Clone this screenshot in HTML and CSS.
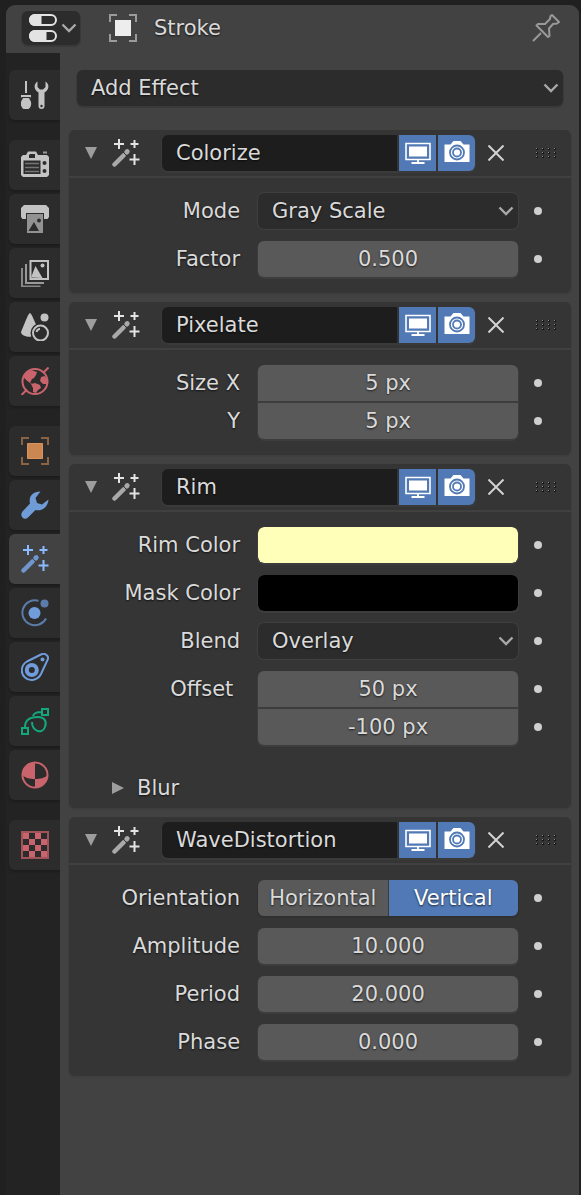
FILE: index.html
```html
<!DOCTYPE html>
<html lang="en">
<head>
<meta charset="utf-8">
<meta name="viewport" content="width=device-width, initial-scale=1">
<title>Stroke - Effects</title>
<link rel="stylesheet" href="styles.css">
</head>
<body>
<svg class="sprite" aria-hidden="true">
  <symbol id="chevron" viewBox="0 0 16 10"><path d="M1.500 1.500L8 8l6.500-6.500" fill="none" stroke="#a8a8a8" stroke-width="2.400"/></symbol>
  <symbol id="down" viewBox="0 0 12 12"><path d="M0 0h12L6 12z" fill="#9d9d9d"/></symbol>
  <symbol id="wand" viewBox="0 0 28 28">
    <path class="wand-plus" d="M7 0v10M2 5h10M22.500 1v8M18.500 5h8M22.500 15v11M17.500 20.500h10" fill="none" stroke-width="2"/>
    <path class="wand-stick" d="M2.500 25.500l9-9" fill="none" stroke-width="4.500" stroke-linecap="round"/>
    <path class="wand-stick" d="M14.800 13l.4-.4" fill="none" stroke-width="5" stroke-linecap="round"/>
    <path class="wand-band" d="M11 13l4 4" fill="none" stroke-width="1"/>
  </symbol>
  <symbol id="monitor" viewBox="0 0 28 28">
    <path d="M2 4.500h24v16H2z" fill="none" stroke="#fff" stroke-width="1.600"/>
    <path d="M5 7.500h18v10H5z" fill="#fff"/>
    <path d="M14 21v3M7.500 24h13" stroke="#fff" stroke-width="1.800"/>
  </symbol>
  <symbol id="camera" viewBox="0 0 28 28">
    <path d="M1.500 5.500h6l3-3.500h7l3 3.500h6V23h-25z" fill="#fff"/>
    <circle cx="14" cy="13.500" r="7" fill="none" stroke="#5179b5" stroke-width="1.800"/>
    <circle cx="14" cy="13.500" r="4" fill="none" stroke="#5179b5" stroke-width="1.800"/>
  </symbol>
  <symbol id="cross" viewBox="0 0 16 16"><path d="M.5.5l15 15M15.500.5l-15 15" stroke="#d2d2d2" stroke-width="2"/></symbol>
  <symbol id="grip" viewBox="0 0 22 12">
    <path d="M1 2h2m4 0h2m4 0h2m4 0h2M1 6h2m4 0h2m4 0h2m4 0h2M1 10h2m4 0h2m4 0h2m4 0h2" stroke="#151515" stroke-width="2"/>
    <path d="M1 1.500h1m5 0h1m5 0h1m5 0h1M1 5.500h1m5 0h1m5 0h1m5 0h1M1 9.500h1m5 0h1m5 0h1m5 0h1" stroke="#8c8c8c" stroke-width="1"/>
  </symbol>
</svg>

<div class="editor">
  <header class="topbar">
    <button class="editor-type" aria-label="Editor type">
      <svg class="icon" viewBox="0 0 28 28"><rect x="1" y="1" width="26" height="10" rx="5" fill="#2c2c2c" stroke="#e3e3e3" stroke-width="2"/><path d="M12.500 0H6a6 6 0 0 0 0 12h6.500z" fill="#e3e3e3"/><rect x="1" y="17" width="26" height="10" rx="5" fill="#2c2c2c" stroke="#e3e3e3" stroke-width="2"/><path d="M17.500 16H6a6 6 0 0 0 0 12h11.500z" fill="#e3e3e3"/></svg>
      <svg class="chevron"><use href="#chevron"/></svg>
    </button>
    <svg class="icon object" viewBox="0 0 28 28"><path d="M1 8V1h7M20 1h7v7M27 20v7h-7M8 27H1v-7" fill="none" stroke="#9b9b9b" stroke-width="2"/><path d="M6 6h16v16H6z" fill="#ededed"/></svg>
    <h1 class="title">Stroke</h1>
    <button class="plain pin" aria-label="Pin"><svg class="icon" viewBox="0 0 28 28"><path d="M1 27l8-8M20 1l7 7-2 1.500-4 .5-4 4.500.500 7.500-1.500 1L4.500 11.500 6 10h7l5-5 .5-3z" fill="none" stroke="#999" stroke-width="2" stroke-linejoin="round"/></svg></button>
  </header>

  <div class="columns">
    <nav class="tabs" aria-label="Properties">
      <button class="tab last" aria-label="Tool"><svg class="icon" viewBox="0 0 28 28"><path d="M5 0v12" stroke="#c3c3c3" stroke-width="2"/><path d="M0 14h10v2l-2 1.500c3 3 3 8-.5 10.500h-5C-1 25.500-1 20.500 2 17.500L0 16z" fill="#c3c3c3"/><path d="M1 16.500h8" stroke="#2c2c2c"/><path d="M16.500.5C12.500 3 12.500 8.500 17.500 11.500V25a3 3 0 0 0 6 0V11.500c5-3 5-8.500 1-11V6L22 8.500h-3L16.500 6z" fill="#c3c3c3"/><circle cx="20.500" cy="25" r="1.200" fill="#2c2c2c"/></svg></button>
      <button class="tab" aria-label="Render"><svg class="icon" viewBox="0 0 28 28"><path d="M2 4h3l2-3.500h8L17 4h9l2 2v18l-2 2H2l-2-2V6z" fill="#c3c3c3"/><path d="M22 1.500h4" stroke="#999" stroke-width="2"/><path d="M9 3h5v4H8V4zM2.500 9.500h17V23h-17z" fill="#2c2c2c"/><path d="M4 12.500h14M4 16.500h14M4 20.500h14" stroke="#757575" stroke-width="1.500"/><circle cx="23.500" cy="12" r="2" fill="#2c2c2c"/><circle cx="23.500" cy="20" r="2" fill="#2c2c2c"/></svg></button>
      <button class="tab" aria-label="Output"><svg class="icon" viewBox="0 0 28 28"><path d="M3 0h22l3 3v9l-1.500 2H23V8H5v6H1.500L0 12V3z" fill="#c3c3c3"/><path d="M6 9h16v19H6z" fill="#929292"/><path d="M7.500 26l5.500-9 5 9z" fill="#2c2c2c"/><circle cx="18" cy="15.500" r="2" fill="#2c2c2c"/></svg></button>
      <button class="tab" aria-label="View layer"><svg class="icon" viewBox="0 0 28 28"><path d="M9.500 2H27v18H9.500z" fill="none" stroke="#c3c3c3" stroke-width="2"/><path d="M10 18.500L14.500 7l7 12z" fill="#c3c3c3"/><circle cx="21.500" cy="6.500" r="2" fill="#c3c3c3"/><path d="M5 5v19h18" fill="none" stroke="#999" stroke-width="2"/><path d="M1 9v18.500h18.500" fill="none" stroke="#888" stroke-width="2"/></svg></button>
      <button class="tab" aria-label="Scene"><svg class="icon" viewBox="0 0 28 28"><path d="M9 0c-2 1-3 5-9 19 0 4 8 6 14 4l4-5C14 10 11 1 9 0z" fill="#c3c3c3"/><circle cx="23.500" cy="4.500" r="4" fill="#c3c3c3"/><circle cx="19.500" cy="20" r="10" fill="#2c2c2c"/><circle cx="19.500" cy="20" r="7.500" fill="#2c2c2c" stroke="#c3c3c3" stroke-width="2"/><path d="M15.500 19c.5-2 1.500-3 3.500-3" fill="none" stroke="#c3c3c3" stroke-width="2"/></svg></button>
      <button class="tab last" aria-label="World"><svg class="icon" viewBox="0 0 28 28"><circle cx="14" cy="14.500" r="12.500" fill="none" stroke="#c9646c" stroke-width="2"/><path d="M27.500.5L22 6M.5 28L6 22.500" stroke="#c9646c" stroke-width="2"/><path d="M5 6l5-3 3 1 3 1-1 3-2 3-2 1-2 4 3 1-2 0-6-5-2-3zM10 17l4-1 5 2 1 3-3 2-2 3-3-1v-4zM24 9l-4 1-1 4 3 3h4v-4z" fill="#c9646c"/></svg></button>
      <button class="tab" aria-label="Object"><svg class="icon" viewBox="0 0 28 28"><path d="M1 8V1h7M20 1h7v7M27 20v7h-7M8 27H1v-7" fill="none" stroke="#8a6244" stroke-width="2"/><path d="M6.500 6.500h15v15h-15z" fill="#cb8751" stroke="#d8935c"/></svg></button>
      <button class="tab" aria-label="Modifiers"><svg class="icon" viewBox="0 0 28 28"><path d="M19.500.500C11 .5 7.500 6 9 12.500L1.500 20.500C-2 25 3 30 7 26.500L14.500 19C21 20.500 27 16 27.500 8.500L21 13.500 16 12 14.500 7z" fill="#6f9bd6"/></svg></button>
      <button class="tab active" aria-label="Effects" aria-current="page"><svg class="icon blue"><use href="#wand"/></svg></button>
      <button class="tab" aria-label="Physics"><svg class="icon" viewBox="0 0 28 28"><path d="M17.500 1.800A12.500 12.500 0 1 0 25 19.500" fill="none" stroke="#5b7ba9" stroke-width="2"/><circle cx="13.500" cy="14" r="6" fill="#719cdb"/><circle cx="23.500" cy="4.500" r="4" fill="#5b7ba9"/></svg></button>
      <button class="tab" aria-label="Constraints"><svg class="icon" viewBox="0 0 28 28"><path d="M6 8.500L20 1.500C24-.5 28.500 3 26.500 7L20 21C17 27 9 29 4 24.500-1 20 0 12 6 8.500z" fill="none" stroke="#719cdb" stroke-width="2"/><circle cx="10.800" cy="17" r="5" fill="none" stroke="#719cdb" stroke-width="4"/><circle cx="21.500" cy="6.500" r="2" fill="#719cdb"/></svg></button>
      <button class="tab" aria-label="Object data"><svg class="icon" viewBox="0 0 28 28"><path d="M21 2h6v6h-6zM1 21h6v6H1zM4 20C4 13 9 10 17 10c7 0 9 5 7 10-3 8-13 4-13-5M12 9c1-3 4-4 8-4" fill="none" stroke="#13a77c" stroke-width="2"/></svg></button>
      <button class="tab last" aria-label="Material"><svg class="icon" viewBox="0 0 28 28"><circle cx="14" cy="14" r="12.500" fill="none" stroke="#c9646c" stroke-width="2"/><path d="M14 1.500V18C9 18 4 17 1.500 14 1.500 7 7 1.500 14 1.500zM14 18c5 0 10-1 12.500-4C26.500 21 21 26.500 14 26.500z" fill="#c9646c"/></svg></button>
      <button class="tab" aria-label="Texture"><svg class="icon" viewBox="0 0 28 28"><path d="M0 0h28v28H0z" fill="#a0545a"/><path d="M2 2h24v24H2z" fill="#c9646c"/><path d="M8 2h6v6H8zM20 2h6v6h-6zM2 8h6v6H2zM14 8h6v6h-6zM8 14h6v6H8zM20 14h6v6h-6zM2 20h6v6H2zM14 20h6v6h-6z" fill="#2c2c2c"/></svg></button>
    </nav>

    <main class="content">
      <div class="dropdown add">
        <select aria-label="Add Effect"><option>Add Effect</option></select>
        <svg class="chevron"><use href="#chevron"/></svg>
      </div>

      <section class="panel">
        <div class="panel-head">
          <button class="plain toggle" aria-label="Collapse" aria-expanded="true"><svg class="tri"><use href="#down"/></svg></button>
          <svg class="icon"><use href="#wand"/></svg>
          <div class="name-group">
            <input class="name" aria-label="Effect name" value="Colorize">
            <button class="mode" aria-label="Show in viewport" aria-pressed="true"><svg class="icon"><use href="#monitor"/></svg></button>
            <button class="mode" aria-label="Show in render" aria-pressed="true"><svg class="icon"><use href="#camera"/></svg></button>
          </div>
          <button class="plain remove" aria-label="Remove"><svg class="cross"><use href="#cross"/></svg></button>
          <svg class="grip"><use href="#grip"/></svg>
        </div>
        <div class="rows">
          <div class="row">
            <label for="mode">Mode</label>
            <div class="dropdown"><select id="mode"><option>Gray Scale</option></select><svg class="chevron"><use href="#chevron"/></svg></div>
            <button class="plain key" aria-label="Animate mode"></button>
          </div>
          <div class="row">
            <label for="factor">Factor</label>
            <input class="number" id="factor" value="0.500">
            <button class="plain key" aria-label="Animate factor"></button>
          </div>
        </div>
      </section>

      <section class="panel">
        <div class="panel-head">
          <button class="plain toggle" aria-label="Collapse" aria-expanded="true"><svg class="tri"><use href="#down"/></svg></button>
          <svg class="icon"><use href="#wand"/></svg>
          <div class="name-group">
            <input class="name" aria-label="Effect name" value="Pixelate">
            <button class="mode" aria-label="Show in viewport" aria-pressed="true"><svg class="icon"><use href="#monitor"/></svg></button>
            <button class="mode" aria-label="Show in render" aria-pressed="true"><svg class="icon"><use href="#camera"/></svg></button>
          </div>
          <button class="plain remove" aria-label="Remove"><svg class="cross"><use href="#cross"/></svg></button>
          <svg class="grip"><use href="#grip"/></svg>
        </div>
        <div class="rows">
          <div class="stack">
            <div class="row">
              <label for="size-x">Size X</label>
              <input class="number" id="size-x" value="5 px">
              <button class="plain key" aria-label="Animate size X"></button>
            </div>
            <div class="row">
              <label for="size-y">Y</label>
              <input class="number" id="size-y" value="5 px">
              <button class="plain key" aria-label="Animate size Y"></button>
            </div>
          </div>
        </div>
      </section>

      <section class="panel">
        <div class="panel-head">
          <button class="plain toggle" aria-label="Collapse" aria-expanded="true"><svg class="tri"><use href="#down"/></svg></button>
          <svg class="icon"><use href="#wand"/></svg>
          <div class="name-group">
            <input class="name" aria-label="Effect name" value="Rim">
            <button class="mode" aria-label="Show in viewport" aria-pressed="true"><svg class="icon"><use href="#monitor"/></svg></button>
            <button class="mode" aria-label="Show in render" aria-pressed="true"><svg class="icon"><use href="#camera"/></svg></button>
          </div>
          <button class="plain remove" aria-label="Remove"><svg class="cross"><use href="#cross"/></svg></button>
          <svg class="grip"><use href="#grip"/></svg>
        </div>
        <div class="rows">
          <div class="row">
            <label for="rim-color">Rim Color</label>
            <input class="color" type="color" id="rim-color" value="#ffffb9">
            <button class="plain key" aria-label="Animate rim color"></button>
          </div>
          <div class="row">
            <label for="mask-color">Mask Color</label>
            <input class="color" type="color" id="mask-color" value="#000000">
            <button class="plain key" aria-label="Animate mask color"></button>
          </div>
          <div class="row">
            <label for="blend">Blend</label>
            <div class="dropdown"><select id="blend"><option>Overlay</option></select><svg class="chevron"><use href="#chevron"/></svg></div>
            <button class="plain key" aria-label="Animate blend"></button>
          </div>
          <div class="stack">
            <div class="row">
              <label for="offset-x">Offset&nbsp;</label>
              <input class="number" id="offset-x" value="50 px">
              <button class="plain key" aria-label="Animate offset X"></button>
            </div>
            <div class="row">
              <span></span>
              <input class="number" aria-label="Offset Y" value="-100 px">
              <button class="plain key" aria-label="Animate offset Y"></button>
            </div>
          </div>
        </div>
        <button class="plain subpanel" aria-expanded="false"><svg class="tri" viewBox="0 0 12 12"><path d="M0 0v12l12-6z" fill="#9d9d9d"/></svg>Blur</button>
      </section>

      <section class="panel">
        <div class="panel-head">
          <button class="plain toggle" aria-label="Collapse" aria-expanded="true"><svg class="tri"><use href="#down"/></svg></button>
          <svg class="icon"><use href="#wand"/></svg>
          <div class="name-group">
            <input class="name" aria-label="Effect name" value="WaveDistortion">
            <button class="mode" aria-label="Show in viewport" aria-pressed="true"><svg class="icon"><use href="#monitor"/></svg></button>
            <button class="mode" aria-label="Show in render" aria-pressed="true"><svg class="icon"><use href="#camera"/></svg></button>
          </div>
          <button class="plain remove" aria-label="Remove"><svg class="cross"><use href="#cross"/></svg></button>
          <svg class="grip"><use href="#grip"/></svg>
        </div>
        <div class="rows">
          <div class="row" role="radiogroup" aria-labelledby="orientation">
            <span class="label" id="orientation">Orientation</span>
            <div class="segments">
              <label class="segment"><input type="radio" name="orientation">Horizontal</label>
              <label class="segment"><input type="radio" name="orientation" checked>Vertical</label>
            </div>
            <button class="plain key" aria-label="Animate orientation"></button>
          </div>
          <div class="row">
            <label for="amplitude">Amplitude</label>
            <input class="number" id="amplitude" value="10.000">
            <button class="plain key" aria-label="Animate amplitude"></button>
          </div>
          <div class="row">
            <label for="period">Period</label>
            <input class="number" id="period" value="20.000">
            <button class="plain key" aria-label="Animate period"></button>
          </div>
          <div class="row">
            <label for="phase">Phase</label>
            <input class="number" id="phase" value="0.000">
            <button class="plain key" aria-label="Animate phase"></button>
          </div>
        </div>
      </section>
    </main>
  </div>
</div>
</body>
</html>
```
FILE: styles.css
```css
* { box-sizing: border-box; }

body {
  --plus: #e4e4e4;
  --stick: #a9a9a9;
  --band: #353535;
  margin: 0;
  background: #202020;
  color: #dadada;
  font: 21px/28px "DejaVu Sans", sans-serif;
  text-shadow: 0 1px 2px rgba(0, 0, 0, .7);
}

button, input, select {
  margin: 0;
  padding: 0;
  border: 0;
  color: inherit;
  font: inherit;
  text-shadow: inherit;
}

svg { display: block; flex: none; }
.sprite { position: absolute; width: 0; height: 0; }
.icon { width: 28px; height: 28px; }
.chevron { width: 16px; height: 10px; }
.tri { width: 12px; height: 12px; }
.cross { width: 16px; height: 16px; }
.grip { width: 22px; height: 12px; }
.plain { background: none; }

.wand-plus { stroke: var(--plus); }
.wand-stick { stroke: var(--stick); }
.wand-band { stroke: var(--band); }

.blue {
  --plus: #8abaff;
  --stick: #6f97cd;
  --band: #424242;
}

.editor {
  display: flex;
  flex-direction: column;
  min-height: 100vh;
  padding: 5px 2px 0 6px;
}

.topbar {
  display: flex;
  align-items: center;
  height: 48px;
  padding: 0 19px 3px 16px;
  border-radius: 9px 9px 0 0;
  background: #424242;
}

.editor-type {
  display: flex;
  align-items: center;
  gap: 4px;
  height: 34px;
  padding: 0 3px 0 7px;
  border-radius: 6px;
  background: #2c2c2c;
  box-shadow: 0 1px 0 1px #393939;
}

.object { margin: 0 17px 0 29px; }

.title {
  flex: 1;
  margin: 0;
  font-size: 21px;
  font-weight: 400;
}

.columns { display: flex; flex: 1; }

.tabs {
  display: flex;
  flex: none;
  flex-direction: column;
  gap: 4px;
  width: 54px;
  padding: 17px 0 0 3px;
  background: #232323;
}

.tab {
  display: flex;
  align-items: center;
  height: 50px;
  padding-left: 12px;
  border-radius: 6px 0 0 6px;
  background: #2c2c2c;
  box-shadow: 0 2px 2px #1d1d1d;
}

.tab.last { margin-bottom: 16px; }
.tab.active { background: #424242; }

.content {
  flex: 1;
  min-width: 0;
  padding: 17px 8px 0 9px;
  background: #424242;
}

.dropdown {
  display: grid;
  align-items: center;
}

.dropdown > * { grid-area: 1 / 1; }

.dropdown select {
  width: 100%;
  height: 36px;
  padding: 0 36px 0 14px;
  border-radius: 6px;
  background: #2c2c2c;
  box-shadow: 0 0 0 1px #3f3f3f;
  appearance: none;
}

.dropdown .chevron {
  justify-self: end;
  margin-right: 4px;
  pointer-events: none;
}

.add { margin: 0 8px 24px; }
.add select { box-shadow: 0 1px 0 1px #3a3a3a; }

.panel {
  margin-bottom: 9px;
  border-radius: 6px;
  background: #353535;
  box-shadow: 0 1px 0 1px #3e3e3e;
}

.panel-head {
  display: flex;
  align-items: center;
  height: 48px;
  padding: 0 14px 0 16px;
  border-bottom: 2px solid #404040;
}

.toggle { margin-right: 15px; }

.name-group {
  display: flex;
  flex: 1;
  gap: 2px;
  min-width: 0;
  height: 36px;
  margin-left: 22px;
  border-radius: 6px;
  background: #333;
  box-shadow: 0 1px 0 1px #3a3a3a;
  overflow: hidden;
}

.name {
  flex: 1;
  min-width: 0;
  padding-left: 14px;
  background: #1d1d1d;
}

.mode {
  display: flex;
  align-items: center;
  justify-content: center;
  width: 37px;
  background: #5179b5;
}

.remove { margin: 0 31px 0 13px; }

.rows {
  display: flex;
  flex-direction: column;
  gap: 12px;
  padding: 15px 0 16px;
}

.row {
  display: grid;
  grid-template-columns: minmax(0, 8fr) minmax(0, 11fr) 53px;
  align-items: center;
  height: 36px;
}

.row > label, .row > .label {
  padding-right: 18px;
  text-align: right;
}

.stack {
  display: flex;
  flex-direction: column;
  gap: 2px;
}

.number, .color {
  width: 100%;
  height: 36px;
  border-radius: 6px;
  background: #595959;
  box-shadow: 0 1px 0 1px #3d3d3d;
}

.number { text-align: center; }
.stack .row:first-child .number { border-radius: 6px 6px 0 0; }
.stack .row:last-child .number { border-radius: 0 0 6px 6px; }

.color {
  background: none;
  appearance: none;
  overflow: hidden;
}

.color::-webkit-color-swatch-wrapper { padding: 0; }
.color::-webkit-color-swatch { border: 0; border-radius: 6px; }

.key {
  display: grid;
  place-items: center;
  width: 40px;
  height: 36px;
}

.key::before {
  content: "";
  width: 8px;
  height: 8px;
  border-radius: 50%;
  background: #cfcfcf;
}

.segments {
  display: grid;
  grid-template-columns: 1fr 1fr;
  gap: 1px;
  height: 36px;
  border-radius: 6px;
  background: #3a3a3a;
  box-shadow: 0 1px 0 1px #303030;
  overflow: hidden;
}

.segment {
  display: grid;
  place-items: center;
  background: #595959;
}

.segment input {
  position: absolute;
  opacity: 0;
}

.segment:has(:checked) {
  background: #5179b5;
  color: #fff;
}

.subpanel {
  display: flex;
  align-items: center;
  gap: 13px;
  width: 100%;
  height: 40px;
  margin-top: 7px;
  padding-left: 43px;
}
```
